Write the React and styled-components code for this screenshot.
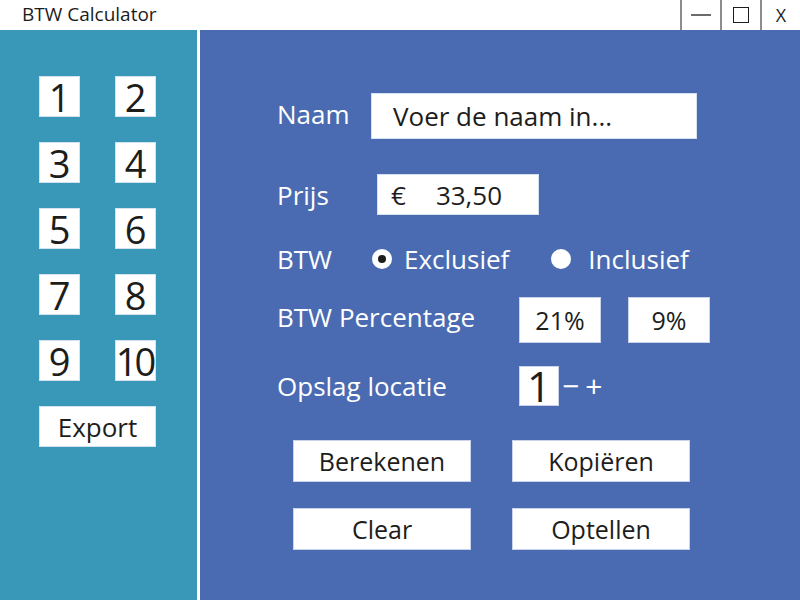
import styled, { createGlobalStyle } from 'styled-components';

const GlobalStyle = createGlobalStyle`
  html, body {
    margin: 0;
    padding: 0;
    width: 800px;
    height: 600px;
    overflow: hidden;
    font-family: "Open Sans", "Liberation Sans", sans-serif;
  }
`;

const slots = ['1', '2', '3', '4', '5', '6', '7', '8', '9', '10'];

export default function App() {
  return (
    <>
      <GlobalStyle />
      <Window>
        <TitleBar>
          <Title>BTW Calculator</Title>
          <Controls>
            <ControlButton type="button" aria-label="minimaliseren">
              <MinimizeGlyph />
            </ControlButton>
            <ControlButton type="button" aria-label="maximaliseren">
              <MaximizeGlyph />
            </ControlButton>
            <ControlButton type="button" aria-label="sluiten">
              X
            </ControlButton>
          </Controls>
        </TitleBar>

        <Body>
          <Sidebar>
            <SlotGrid>
              {slots.map((slot) => (
                <SlotBox key={slot} $wide={slot.length > 1}>
                  {slot}
                </SlotBox>
              ))}
              <ExportButton type="button">Export</ExportButton>
            </SlotGrid>
          </Sidebar>

          <Main>
            <Row $top={63}>
              <Label $width={94} $lift={4}>Naam</Label>
              <TextBox $width={326} $height={46}>
                Voer de naam in...
              </TextBox>
            </Row>

            <Row $top={35}>
              <Label $width={100}>Prijs</Label>
              <TextBox $width={162} $height={41} $pad={13}>
                <span>€</span>
                <PriceValue>33,50</PriceValue>
              </TextBox>
            </Row>

            <Row $top={26}>
              <Label $width={95}>BTW</Label>
              <RadioOption>
                <RadioDot $checked />
                Exclusief
              </RadioOption>
              <RadioOption $gap={17}>
                <RadioDot />
                Inclusief
              </RadioOption>
            </Row>

            <Row $top={20}>
              <Label $width={242} $lift={6}>BTW Percentage</Label>
              <PercentButton type="button">21%</PercentButton>
              <PercentButton type="button">9%</PercentButton>
            </Row>

            <Row $top={23}>
              <Label $width={242}>Opslag locatie</Label>
              <LocationBox>1</LocationBox>
              <Stepper>
                <StepSign>−</StepSign>
                <StepSign>+</StepSign>
              </Stepper>
            </Row>

            <ActionGrid>
              <ActionButton type="button">Berekenen</ActionButton>
              <ActionButton type="button">Kopiëren</ActionButton>
              <ActionButton type="button">Clear</ActionButton>
              <ActionButton type="button">Optellen</ActionButton>
            </ActionGrid>
          </Main>
        </Body>
      </Window>
    </>
  );
}

const Window = styled.div`
  width: 800px;
  height: 600px;
  display: flex;
  flex-direction: column;
  background: #ffffff;
  color: #1d1d1b;
`;

const TitleBar = styled.header`
  height: 30px;
  display: flex;
  align-items: stretch;
  justify-content: space-between;
  background: #ffffff;
`;

const Title = styled.h1`
  margin: 0 0 0 22px;
  font-size: 19px;
  font-weight: 400;
  line-height: 28px;
  color: #1d1d1b;
`;

const Controls = styled.div`
  display: flex;
`;

const ControlButton = styled.button`
  width: 40px;
  height: 30px;
  padding: 0;
  border: none;
  border-left: 2px solid #8c8c8c;
  background: #ffffff;
  display: flex;
  align-items: center;
  justify-content: center;
  font-family: "Open Sans", "Liberation Sans", sans-serif;
  font-size: 18px;
  color: #1d1d1b;
`;

const MinimizeGlyph = styled.span`
  display: block;
  width: 20px;
  height: 2px;
  background: #6b6b6b;
`;

const MaximizeGlyph = styled.span`
  display: block;
  width: 14px;
  height: 14px;
  border: 1.5px solid #1d1d1b;
`;

const Body = styled.div`
  flex: 1;
  display: flex;
`;

const Sidebar = styled.aside`
  width: 200px;
  flex-shrink: 0;
  border-right: 3px solid #ffffff;
  background: #3997b8;
  padding: 46px 0 0 39px;
  box-sizing: border-box;
`;

const SlotGrid = styled.div`
  display: grid;
  grid-template-columns: 41px 41px;
  column-gap: 35px;
  row-gap: 25px;
`;

const WhiteBox = styled.div`
  box-sizing: border-box;
  background: #ffffff;
  border: 1px solid #d3e2ee;
  display: flex;
  align-items: center;
  justify-content: center;
  color: #1d1d1b;
  font-family: "Open Sans", "Liberation Sans", sans-serif;
`;

const SlotBox = styled(WhiteBox)`
  height: 41px;
  font-size: 38px;
  line-height: 1;
  letter-spacing: ${(p) => (p.$wide ? '-3px' : '0')};
  padding-right: ${(p) => (p.$wide ? '2px' : '0')};
`;

const ExportButton = styled.button`
  grid-column: 1 / 3;
  height: 41px;
  padding: 0;
  background: #ffffff;
  border: 1px solid #d3e2ee;
  font-family: "Open Sans", "Liberation Sans", sans-serif;
  font-size: 26px;
  color: #1d1d1b;
`;

const Main = styled.main`
  flex: 1;
  background: #4a6bb1;
  padding-left: 77px;
  display: flex;
  flex-direction: column;
`;

const Row = styled.div`
  display: flex;
  align-items: center;
  margin-top: ${(p) => p.$top}px;
`;

const Label = styled.span`
  width: ${(p) => p.$width}px;
  flex-shrink: 0;
  margin-bottom: ${(p) => p.$lift ?? 0}px;
  font-size: 26px;
  color: #ffffff;
  line-height: 36px;
`;

const TextBox = styled(WhiteBox)`
  width: ${(p) => p.$width}px;
  height: ${(p) => p.$height}px;
  justify-content: flex-start;
  padding-left: ${(p) => p.$pad ?? 21}px;
  font-size: 26px;
`;

const PriceValue = styled.span`
  margin-left: 30px;
`;

const RadioOption = styled.label`
  display: flex;
  align-items: center;
  gap: ${(p) => p.$gap ?? 12}px;
  margin-right: 42px;
  font-size: 26px;
  line-height: 30px;
  color: #ffffff;
`;

const RadioDot = styled.span`
  width: 20px;
  height: 20px;
  border-radius: 50%;
  background: #ffffff;
  display: flex;
  align-items: center;
  justify-content: center;

  &::after {
    content: '';
    display: ${(p) => (p.$checked ? 'block' : 'none')};
    width: 8px;
    height: 8px;
    border-radius: 50%;
    background: #1d1d1b;
  }
`;

const PercentButton = styled.button`
  width: 82px;
  height: 46px;
  margin-right: 27px;
  padding: 0;
  background: #ffffff;
  border: 1px solid #c9d3ea;
  font-family: "Open Sans", "Liberation Sans", sans-serif;
  font-size: 25px;
  color: #1d1d1b;
`;

const LocationBox = styled(WhiteBox)`
  width: 40px;
  height: 40px;
  border-color: #c9d3ea;
  font-size: 42px;
  line-height: 1;
`;

const Stepper = styled.div`
  display: flex;
  gap: 6px;
  margin-left: 3px;
`;

const StepSign = styled.span`
  font-size: 30px;
  line-height: 1;
  color: #ffffff;
`;

const ActionGrid = styled.div`
  display: grid;
  grid-template-columns: 178px 178px;
  column-gap: 41px;
  row-gap: 26px;
  margin: 34px 0 0 16px;
`;

const ActionButton = styled.button`
  height: 42px;
  padding: 0;
  background: #ffffff;
  border: 1px solid #c9d3ea;
  font-family: "Open Sans", "Liberation Sans", sans-serif;
  font-size: 25px;
  color: #1d1d1b;
`;
